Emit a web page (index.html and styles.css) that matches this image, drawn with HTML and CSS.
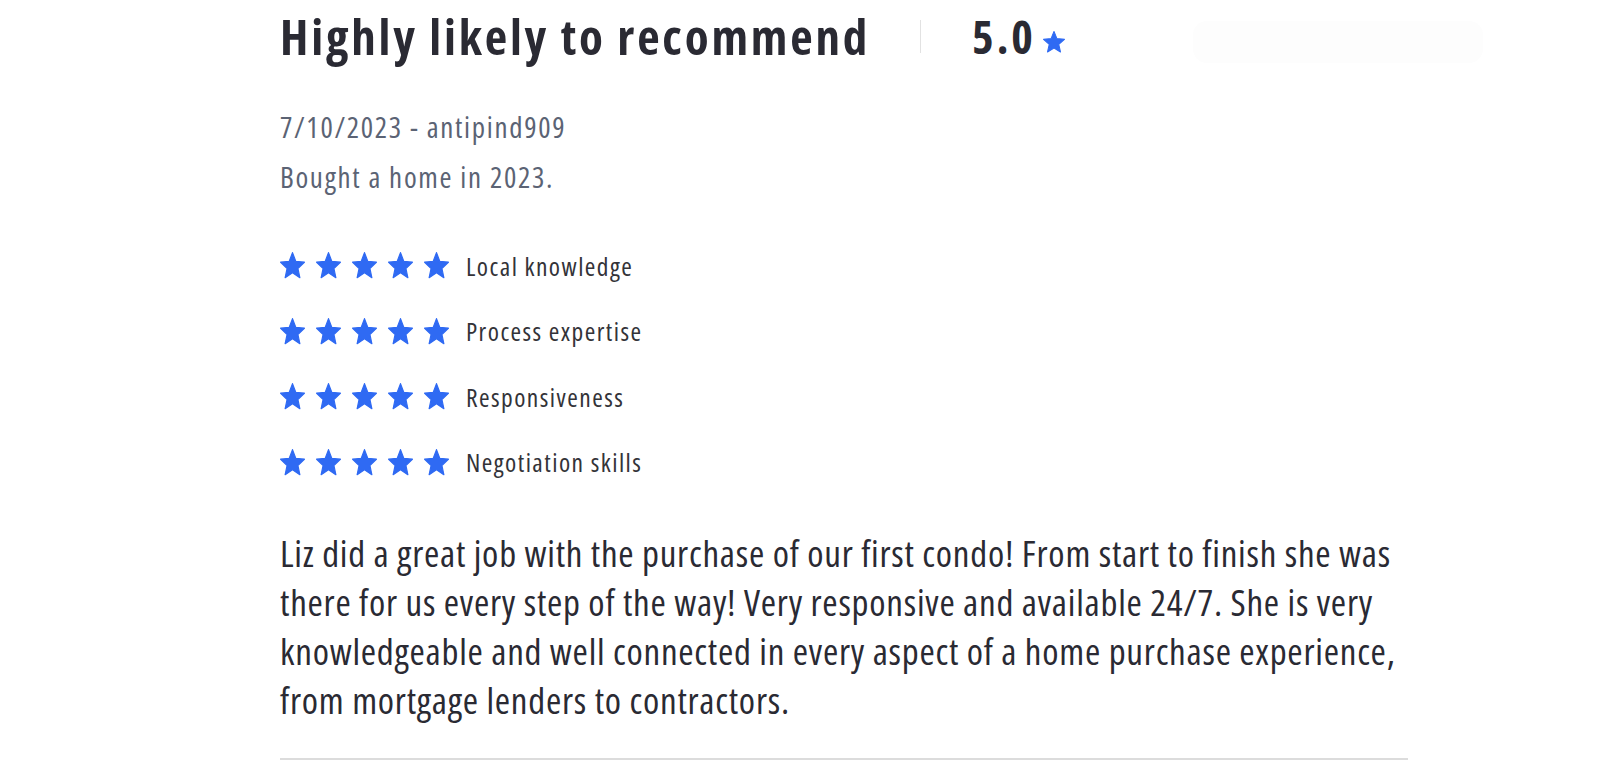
FILE: index.html
```html
<!DOCTYPE html>
<html lang="en">
<head>
<meta charset="utf-8">
<title>Review</title>
<link rel="stylesheet" href="styles.css">
</head>
<body>
<div class="review">
  <div class="review-head">
    <h2 class="review-title">Highly likely to recommend</h2>
    <span class="divider"></span>
    <span class="score">5.0</span>
    <svg class="score-star" viewBox="1.5 1.5 21 20.5" preserveAspectRatio="none"><path d="M12 17.27L18.18 21l-1.64-7.03L22 9.24l-7.19-.61L12 2 9.19 8.63 2 9.24l5.46 4.73L5.82 21z"/></svg>
    <span class="ghost"></span>
  </div>
  <div class="meta">7/10/2023 - antipind909</div>
  <div class="meta">Bought a home in 2023.</div>
  <ul class="ratings">
    <li class="rating"><span class="stars"><svg class="star" viewBox="1.5 1.5 21 20.5" preserveAspectRatio="none"><path d="M12 17.27L18.18 21l-1.64-7.03L22 9.24l-7.19-.61L12 2 9.19 8.63 2 9.24l5.46 4.73L5.82 21z"/></svg><svg class="star" viewBox="1.5 1.5 21 20.5" preserveAspectRatio="none"><path d="M12 17.27L18.18 21l-1.64-7.03L22 9.24l-7.19-.61L12 2 9.19 8.63 2 9.24l5.46 4.73L5.82 21z"/></svg><svg class="star" viewBox="1.5 1.5 21 20.5" preserveAspectRatio="none"><path d="M12 17.27L18.18 21l-1.64-7.03L22 9.24l-7.19-.61L12 2 9.19 8.63 2 9.24l5.46 4.73L5.82 21z"/></svg><svg class="star" viewBox="1.5 1.5 21 20.5" preserveAspectRatio="none"><path d="M12 17.27L18.18 21l-1.64-7.03L22 9.24l-7.19-.61L12 2 9.19 8.63 2 9.24l5.46 4.73L5.82 21z"/></svg><svg class="star" viewBox="1.5 1.5 21 20.5" preserveAspectRatio="none"><path d="M12 17.27L18.18 21l-1.64-7.03L22 9.24l-7.19-.61L12 2 9.19 8.63 2 9.24l5.46 4.73L5.82 21z"/></svg></span><span class="label">Local knowledge</span></li>
    <li class="rating"><span class="stars"><svg class="star" viewBox="1.5 1.5 21 20.5" preserveAspectRatio="none"><path d="M12 17.27L18.18 21l-1.64-7.03L22 9.24l-7.19-.61L12 2 9.19 8.63 2 9.24l5.46 4.73L5.82 21z"/></svg><svg class="star" viewBox="1.5 1.5 21 20.5" preserveAspectRatio="none"><path d="M12 17.27L18.18 21l-1.64-7.03L22 9.24l-7.19-.61L12 2 9.19 8.63 2 9.24l5.46 4.73L5.82 21z"/></svg><svg class="star" viewBox="1.5 1.5 21 20.5" preserveAspectRatio="none"><path d="M12 17.27L18.18 21l-1.64-7.03L22 9.24l-7.19-.61L12 2 9.19 8.63 2 9.24l5.46 4.73L5.82 21z"/></svg><svg class="star" viewBox="1.5 1.5 21 20.5" preserveAspectRatio="none"><path d="M12 17.27L18.18 21l-1.64-7.03L22 9.24l-7.19-.61L12 2 9.19 8.63 2 9.24l5.46 4.73L5.82 21z"/></svg><svg class="star" viewBox="1.5 1.5 21 20.5" preserveAspectRatio="none"><path d="M12 17.27L18.18 21l-1.64-7.03L22 9.24l-7.19-.61L12 2 9.19 8.63 2 9.24l5.46 4.73L5.82 21z"/></svg></span><span class="label">Process expertise</span></li>
    <li class="rating"><span class="stars"><svg class="star" viewBox="1.5 1.5 21 20.5" preserveAspectRatio="none"><path d="M12 17.27L18.18 21l-1.64-7.03L22 9.24l-7.19-.61L12 2 9.19 8.63 2 9.24l5.46 4.73L5.82 21z"/></svg><svg class="star" viewBox="1.5 1.5 21 20.5" preserveAspectRatio="none"><path d="M12 17.27L18.18 21l-1.64-7.03L22 9.24l-7.19-.61L12 2 9.19 8.63 2 9.24l5.46 4.73L5.82 21z"/></svg><svg class="star" viewBox="1.5 1.5 21 20.5" preserveAspectRatio="none"><path d="M12 17.27L18.18 21l-1.64-7.03L22 9.24l-7.19-.61L12 2 9.19 8.63 2 9.24l5.46 4.73L5.82 21z"/></svg><svg class="star" viewBox="1.5 1.5 21 20.5" preserveAspectRatio="none"><path d="M12 17.27L18.18 21l-1.64-7.03L22 9.24l-7.19-.61L12 2 9.19 8.63 2 9.24l5.46 4.73L5.82 21z"/></svg><svg class="star" viewBox="1.5 1.5 21 20.5" preserveAspectRatio="none"><path d="M12 17.27L18.18 21l-1.64-7.03L22 9.24l-7.19-.61L12 2 9.19 8.63 2 9.24l5.46 4.73L5.82 21z"/></svg></span><span class="label">Responsiveness</span></li>
    <li class="rating"><span class="stars"><svg class="star" viewBox="1.5 1.5 21 20.5" preserveAspectRatio="none"><path d="M12 17.27L18.18 21l-1.64-7.03L22 9.24l-7.19-.61L12 2 9.19 8.63 2 9.24l5.46 4.73L5.82 21z"/></svg><svg class="star" viewBox="1.5 1.5 21 20.5" preserveAspectRatio="none"><path d="M12 17.27L18.18 21l-1.64-7.03L22 9.24l-7.19-.61L12 2 9.19 8.63 2 9.24l5.46 4.73L5.82 21z"/></svg><svg class="star" viewBox="1.5 1.5 21 20.5" preserveAspectRatio="none"><path d="M12 17.27L18.18 21l-1.64-7.03L22 9.24l-7.19-.61L12 2 9.19 8.63 2 9.24l5.46 4.73L5.82 21z"/></svg><svg class="star" viewBox="1.5 1.5 21 20.5" preserveAspectRatio="none"><path d="M12 17.27L18.18 21l-1.64-7.03L22 9.24l-7.19-.61L12 2 9.19 8.63 2 9.24l5.46 4.73L5.82 21z"/></svg><svg class="star" viewBox="1.5 1.5 21 20.5" preserveAspectRatio="none"><path d="M12 17.27L18.18 21l-1.64-7.03L22 9.24l-7.19-.61L12 2 9.19 8.63 2 9.24l5.46 4.73L5.82 21z"/></svg></span><span class="label">Negotiation skills</span></li>
  </ul>
  <p class="body">Liz did a great job with the purchase of our first condo! From start to finish she was there for us every step of the way! Very responsive and available 24/7. She is very knowledgeable and well connected in every aspect of a home purchase experience, from mortgage lenders to contractors.</p>
</div>
</body>
</html>
```

FILE: styles.css
```css
html, body {
  margin: 0;
  padding: 0;
  background: #ffffff;
}

body {
  font-family: "Open Sans", "Noto Sans", "Liberation Sans", sans-serif;
  font-stretch: 87.5%;
  color: #2a2a33;
}

.review {
  margin-left: 280px;
  width: 1128px;
  border-bottom: 2px solid #dcdcdc;
  padding-bottom: 34px;
}

.review-head {
  display: flex;
  align-items: center;
  height: 72px;
}

.review-title {
  margin: 0 50px 0 0;
  font-size: 49px;
  font-weight: 700;
  line-height: 72px;
  letter-spacing: 2.8px;
  color: #2a2a33;
}

.divider {
  width: 1px;
  height: 33px;
  background: #e2e2e2;
  margin-right: 51px;
}

.score {
  font-size: 46px;
  font-weight: 700;
  line-height: 72px;
  letter-spacing: 3px;
  color: #2a2a33;
}

.score-star {
  width: 22px;
  height: 22px;
  margin-left: 7px;
  margin-top: 12px;
  fill: #2f6af3;
  stroke: #2f6af3;
  stroke-width: 1;
  stroke-linejoin: round;
}

.ghost {
  width: 290px;
  height: 42px;
  margin-left: auto;
  margin-right: -75px;
  margin-top: 12px;
  border-radius: 14px;
  background: #fdfdfd;
}

.meta {
  font-size: 29px;
  line-height: 50px;
  letter-spacing: 1.7px;
  color: #5b6374;
}

.review-head + .meta {
  margin-top: 30px;
}

.ratings {
  list-style: none;
  margin: 31px 0 0 0;
  padding: 0;
}

.rating {
  display: flex;
  align-items: center;
  height: 65.5px;
}

.stars {
  display: flex;
  gap: 11px;
  margin-right: 17px;
}

.star {
  width: 25px;
  height: 27px;
  fill: #2f6af3;
  stroke: #2f6af3;
  stroke-width: 1;
  stroke-linejoin: round;
}

.label {
  font-size: 25.5px;
  letter-spacing: 1.45px;
  color: #333338;
}

.body {
  margin: 33px 0 0 0;
  width: 1150px;
  font-size: 37px;
  line-height: 49px;
  letter-spacing: 0.75px;
  color: #2a2a33;
}
```
